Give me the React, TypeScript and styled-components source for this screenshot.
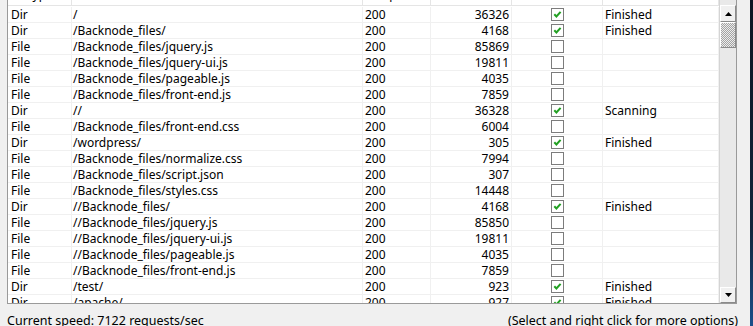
import React from "react";
import styled, { createGlobalStyle } from "styled-components";

const GlobalStyle = createGlobalStyle`
  html, body { margin: 0; padding: 0; background: #f0f0f0; }
  body {
    font-family: "Noto Sans", "Liberation Sans", sans-serif;
    font-size: 12px;
    color: #000;
  }
`;

type Align = "left" | "right" | "center";
type Col = { key: string; width: number; align: Align; pad: number; title: string };

const columns: Col[] = [
  { key: "type", width: 64, align: "left", pad: 3, title: "Type" },
  { key: "path", width: 291, align: "left", pad: 1, title: "Path" },
  { key: "code", width: 68, align: "left", pad: 2, title: "Response" },
  { key: "size", width: 81, align: "right", pad: 2, title: "Size" },
  { key: "scanned", width: 91, align: "center", pad: 0, title: "Scanned" },
  { key: "status", width: 116, align: "left", pad: 2, title: "Status" },
];

const gridCols = columns.map((c) => `${c.width}px`).join(" ");

type Entry = {
  type: "Dir" | "File";
  path: string;
  code: string;
  size: string;
  checked: boolean;
  status: string;
};

const rows: Entry[] = [
  { type: "Dir", path: "/", code: "200", size: "36326", checked: true, status: "Finished" },
  { type: "Dir", path: "/Backnode_files/", code: "200", size: "4168", checked: true, status: "Finished" },
  { type: "File", path: "/Backnode_files/jquery.js", code: "200", size: "85869", checked: false, status: "" },
  { type: "File", path: "/Backnode_files/jquery-ui.js", code: "200", size: "19811", checked: false, status: "" },
  { type: "File", path: "/Backnode_files/pageable.js", code: "200", size: "4035", checked: false, status: "" },
  { type: "File", path: "/Backnode_files/front-end.js", code: "200", size: "7859", checked: false, status: "" },
  { type: "Dir", path: "//", code: "200", size: "36328", checked: true, status: "Scanning" },
  { type: "File", path: "/Backnode_files/front-end.css", code: "200", size: "6004", checked: false, status: "" },
  { type: "Dir", path: "/wordpress/", code: "200", size: "305", checked: true, status: "Finished" },
  { type: "File", path: "/Backnode_files/normalize.css", code: "200", size: "7994", checked: false, status: "" },
  { type: "File", path: "/Backnode_files/script.json", code: "200", size: "307", checked: false, status: "" },
  { type: "File", path: "/Backnode_files/styles.css", code: "200", size: "14448", checked: false, status: "" },
  { type: "Dir", path: "//Backnode_files/", code: "200", size: "4168", checked: true, status: "Finished" },
  { type: "File", path: "//Backnode_files/jquery.js", code: "200", size: "85850", checked: false, status: "" },
  { type: "File", path: "//Backnode_files/jquery-ui.js", code: "200", size: "19811", checked: false, status: "" },
  { type: "File", path: "//Backnode_files/pageable.js", code: "200", size: "4035", checked: false, status: "" },
  { type: "File", path: "//Backnode_files/front-end.js", code: "200", size: "7859", checked: false, status: "" },
  { type: "Dir", path: "/test/", code: "200", size: "923", checked: true, status: "Finished" },
  { type: "Dir", path: "/apache/", code: "200", size: "927", checked: true, status: "Finished" },
];

const Window = styled.div`
  display: flex;
  width: 753px;
  height: 326px;
  overflow: hidden;
  background: #f0f0f0;
`;

const Main = styled.div`
  flex: 1;
  display: flex;
  flex-direction: column;
  padding-left: 7px;
  min-width: 0;
`;

const Edge = styled.div`
  width: 3px;
  background: linear-gradient(#0d1522, #12243a 70%, #1b4f8a);
`;

const ListBox = styled.div`
  display: flex;
  width: 730px;
  height: 304px;
  box-sizing: border-box;
  border: 1px solid #9a9a9a;
  border-top: none;
  background: #fff;
  flex-shrink: 0;
`;

const Table = styled.div`
  width: 711px;
  display: flex;
  flex-direction: column;
  overflow: hidden;
  background: #fff;
`;

const HeaderRow = styled.div`
  display: grid;
  grid-template-columns: ${gridCols};
  height: 6px;
  box-sizing: border-box;
  border-bottom: 1px solid #e5e5e5;
  overflow: hidden;
  flex-shrink: 0;
`;

const HeaderCell = styled.div`
  display: flex;
  align-items: flex-end;
  justify-content: center;
  border-right: 1px solid #e5e5e5;
  overflow: hidden;
`;

const HeaderText = styled.span`
  line-height: 16px;
  margin-bottom: 2px;
  white-space: nowrap;
  flex-shrink: 0;
`;

const Rows = styled.div`
  display: flex;
  flex-direction: column;
  padding-top: 1px;
`;

const Row = styled.div`
  display: grid;
  grid-template-columns: ${gridCols};
  height: 16px;
  box-sizing: border-box;
  border-bottom: 1px solid #f0f0f0;
  flex-shrink: 0;
`;

const Cell = styled.div<{ $align: Align; $pad: number }>`
  display: flex;
  align-items: center;
  justify-content: ${(p) =>
    p.$align === "right" ? "flex-end" : p.$align === "center" ? "center" : "flex-start"};
  padding: 0 ${(p) => (p.$align === "right" ? p.$pad : 0)}px 0
    ${(p) => (p.$align === "left" ? p.$pad : 0)}px;
  line-height: 15px;
  white-space: nowrap;
  overflow: hidden;
  border-right: 1px solid #f0f0f0;
`;

const CheckBox = styled.span`
  display: inline-flex;
  width: 13px;
  height: 13px;
  box-sizing: border-box;
  border: 1px solid #7c7c7c;
  background: #fff;
  align-items: center;
  justify-content: center;
`;

const ScrollBar = styled.div`
  width: 17px;
  display: flex;
  flex-direction: column;
  background: #e9e9e9;
  border-left: 1px solid #d4d4d4;
  box-sizing: border-box;
`;

const TopGap = styled.div`
  height: 5px;
  flex-shrink: 0;
`;

const ArrowButton = styled.div<{ $h: number }>`
  height: ${(p) => p.$h}px;
  flex-shrink: 0;
  box-sizing: border-box;
  border: 1px solid;
  border-color: #ffffff #8a8a8a #8a8a8a #ffffff;
  background: #f0f0f0;
  display: flex;
  align-items: center;
  justify-content: center;
`;

const Thumb = styled.div`
  height: 26px;
  flex-shrink: 0;
  box-sizing: border-box;
  border: 1px solid;
  border-color: #ffffff #8a8a8a #8a8a8a #ffffff;
  background-color: #ececec;
  background-image: repeating-conic-gradient(#a3a3a3 0 25%, #ececec 0 50%);
  background-size: 2px 2px;
`;

const Track = styled.div`
  flex: 1;
`;

const StatusBar = styled.div`
  display: flex;
  justify-content: space-between;
  width: 731px;
  padding-top: 9px;
  font-size: 12.5px;
  line-height: 16px;
  white-space: nowrap;
`;

const Arrow = ({ dir }: { dir: "up" | "down" }) => (
  <svg width="7" height="4" viewBox="0 0 7 4">
    <polygon points={dir === "up" ? "0,4 7,4 3.5,0" : "0,0 7,0 3.5,4"} fill="#000" />
  </svg>
);

const Check = () => (
  <svg width="11" height="11" viewBox="0 0 11 11">
    <path d="M2.3 5.3 L4.4 7.5 L8.6 2.8" stroke="#23a023" strokeWidth="2" fill="none" />
  </svg>
);

const cellValue = (r: Entry, key: string) => {
  switch (key) {
    case "type":
      return r.type;
    case "path":
      return r.path;
    case "code":
      return r.code;
    case "size":
      return r.size;
    case "scanned":
      return <CheckBox>{r.checked && <Check />}</CheckBox>;
    default:
      return r.status;
  }
};

export default function App() {
  return (
    <>
      <GlobalStyle />
      <Window>
        <Main>
          <ListBox>
            <Table>
              <HeaderRow>
                {columns.map((c) => (
                  <HeaderCell key={c.key}>
                    <HeaderText>{c.title}</HeaderText>
                  </HeaderCell>
                ))}
              </HeaderRow>
              <Rows>
                {rows.map((r, i) => (
                  <Row key={i}>
                    {columns.map((c) => (
                      <Cell key={c.key} $align={c.align} $pad={c.pad}>
                        {cellValue(r, c.key)}
                      </Cell>
                    ))}
                  </Row>
                ))}
              </Rows>
            </Table>
            <ScrollBar>
              <TopGap />
              <ArrowButton $h={17}>
                <Arrow dir="up" />
              </ArrowButton>
              <Thumb />
              <Track />
              <ArrowButton $h={16}>
                <Arrow dir="down" />
              </ArrowButton>
            </ScrollBar>
          </ListBox>
          <StatusBar>
            <span>Current speed: 7122 requests/sec</span>
            <span>(Select and right click for more options)</span>
          </StatusBar>
        </Main>
        <Edge />
      </Window>
    </>
  );
}
